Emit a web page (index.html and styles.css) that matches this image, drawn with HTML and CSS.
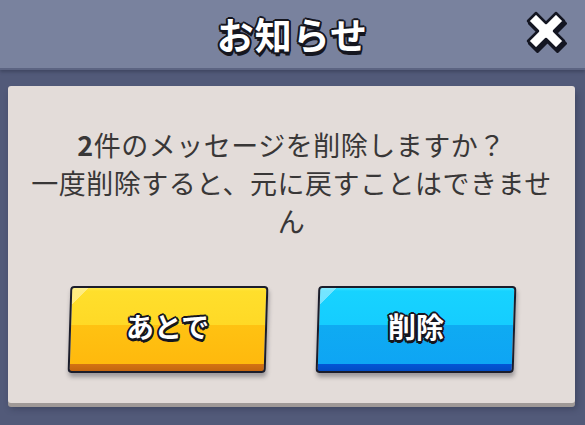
FILE: index.html
```html
<!DOCTYPE html>
<html lang="ja">
<head>
    <meta charset="UTF-8">
    <meta name="viewport" content="width=device-width, initial-scale=1.0">
    <title>お知らせ</title>
    <link rel="stylesheet" href="styles.css">
</head>
<body>

    <div class="header">
        <h1 class="title">お知らせ</h1>
        <button class="close" aria-label="閉じる">
            <svg width="44" height="44" viewBox="0 0 44 44">
                <!-- shadow -->
                <path d="M12 4 L22 14 L32 4 L40 12 L30 22 L40 32 L32 40 L22 30 L12 40 L4 32 L14 22 L4 12 Z"
                      transform="translate(1.5 2.5)" fill="#141622" stroke="#141622" stroke-width="3" stroke-linejoin="round"/>
                <path d="M12 4 L22 14 L32 4 L40 12 L30 22 L40 32 L32 40 L22 30 L12 40 L4 32 L14 22 L4 12 Z"
                      fill="#ffffff" stroke="#141622" stroke-width="2.5" stroke-linejoin="round"/>
            </svg>
        </button>
    </div>

    <div class="panel">
        <p class="message"><span class="count">2</span>件のメッセージを削除しますか？<br>一度削除すると、元に戻すことはできません</p>

        <div class="actions">
            <button class="btn btn-later"><span>あとで</span></button>
            <button class="btn btn-delete"><span>削除</span></button>
        </div>
    </div>

</body>
</html>
```

FILE: styles.css
```css
body {
    font-family: "Noto Sans CJK JP", "Noto Sans", sans-serif;
    background-color: #525a79;
    margin: 0;
    width: 585px;
    height: 425px;
    overflow: hidden;
}
.header {
    position: relative;
    height: 68px;
    display: flex;
    justify-content: center;
    align-items: center;
    background-color: #79829e;
    box-shadow: 0 2px 0 #5c6482, 0 4px 3px rgba(30, 34, 55, 0.35);
}
.title {
    margin: 0;
    font-size: 37px;
    font-weight: 700;
    color: #fff;
    letter-spacing: 1px;
    text-shadow:
        -2px 0 0 #15161f, 2px 0 0 #15161f, 0 -2px 0 #15161f, 0 2px 0 #15161f,
        -1.5px -1.5px 0 #15161f, 1.5px -1.5px 0 #15161f, -1.5px 1.5px 0 #15161f, 1.5px 1.5px 0 #15161f,
        1px 3.5px 0 #15161f;
}
.close {
    position: absolute;
    right: 17px;
    top: 9px;
    padding: 0;
    border: none;
    background: none;
    width: 44px;
    height: 44px;
    cursor: pointer;
}
.close svg {
    display: block;
}
.panel {
    margin: 18px 10px 0 8px;
    height: 317px;
    box-sizing: border-box;
    padding: 40px 18px 0;
    background-color: #e3dcd9;
    border-radius: 3px;
    box-shadow: 0 4px 0 #9f9997, 2px 6px 6px rgba(30, 34, 55, 0.35);
}
.message {
    margin: 0;
    font-size: 27px;
    line-height: 38px;
    letter-spacing: 0.5px;
    color: #393737;
    text-align: center;
}
.count {
    font-weight: 700;
}
.actions {
    display: flex;
    justify-content: center;
    gap: 50px;
    margin-top: 46px;
}
.btn {
    position: relative;
    width: 198px;
    height: 87px;
    padding: 0 0 8px;
    box-sizing: border-box;
    border: 2px solid #1b1d2b;
    border-radius: 4px;
    transform: skewX(-1.8deg);
    box-shadow: 1px 4px 4px rgba(30, 30, 40, 0.35);
    font-family: inherit;
    font-size: 28px;
    font-weight: 700;
    color: #fff;
    cursor: pointer;
    overflow: hidden;
}
.btn::before {
    content: "";
    position: absolute;
    left: 0;
    top: 0;
    width: 18px;
    height: 18px;
    background: linear-gradient(135deg, rgba(255, 255, 255, 0.4) 45%, transparent 45%);
}
.btn span {
    display: inline-block;
    transform: skewX(1.8deg);
    text-shadow:
        -2px 0 0 #15161f, 2px 0 0 #15161f, 0 -2px 0 #15161f, 0 2px 0 #15161f,
        -1.5px -1.5px 0 #15161f, 1.5px -1.5px 0 #15161f, -1.5px 1.5px 0 #15161f, 1.5px 1.5px 0 #15161f,
        0.5px 3px 0 #15161f;
}
.btn-later {
    background: linear-gradient(to bottom,
        #ffe94a 0, #ffdf2c 3px, #ffd926 37px,
        #ffc212 37px, #ffb90d 76px,
        #d47313 76px, #c4650f 83px);
}
.btn-delete {
    background: linear-gradient(to bottom,
        #3fe2ff 0, #17d3ff 3px, #15cdff 37px,
        #0fabf2 37px, #0ea5f4 76px,
        #0356d6 76px, #034cc4 83px);
}
```
